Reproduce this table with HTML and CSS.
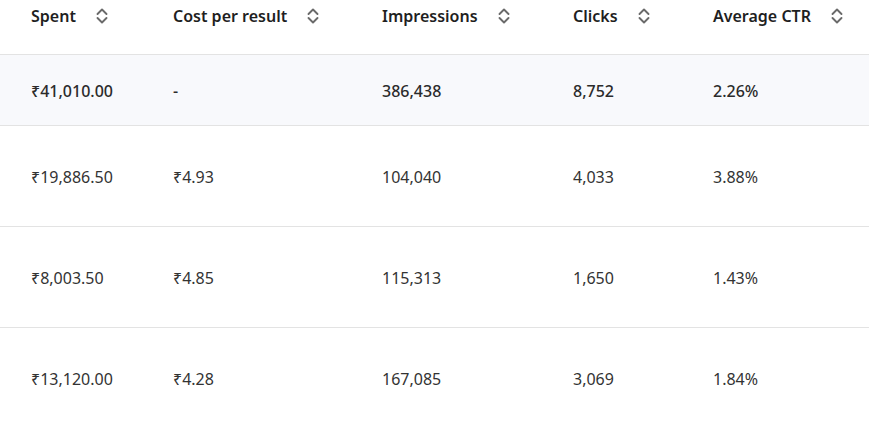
FILE: index.html
```html
<!DOCTYPE html>
<html>
<head>
<meta charset="utf-8">
<link rel="stylesheet" href="styles.css">
</head>
<body>
<div class="table">
  <div class="row head">
    <div class="cell"><span>Spent</span><svg class="sort" viewBox="0 0 12 18"><path d="M1.5 7 L6 2.5 L10.5 7 M1.5 11 L6 15.5 L10.5 11"/></svg></div>
    <div class="cell"><span>Cost per result</span><svg class="sort" viewBox="0 0 12 18"><path d="M1.5 7 L6 2.5 L10.5 7 M1.5 11 L6 15.5 L10.5 11"/></svg></div>
    <div class="cell"><span>Impressions</span><svg class="sort" viewBox="0 0 12 18"><path d="M1.5 7 L6 2.5 L10.5 7 M1.5 11 L6 15.5 L10.5 11"/></svg></div>
    <div class="cell"><span>Clicks</span><svg class="sort" viewBox="0 0 12 18"><path d="M1.5 7 L6 2.5 L10.5 7 M1.5 11 L6 15.5 L10.5 11"/></svg></div>
    <div class="cell"><span>Average CTR</span><svg class="sort" viewBox="0 0 12 18"><path d="M1.5 7 L6 2.5 L10.5 7 M1.5 11 L6 15.5 L10.5 11"/></svg></div>
  </div>
  <div class="row total">
    <div class="cell">₹41,010.00</div>
    <div class="cell">-</div>
    <div class="cell">386,438</div>
    <div class="cell">8,752</div>
    <div class="cell">2.26%</div>
  </div>
  <div class="row body">
    <div class="cell">₹19,886.50</div>
    <div class="cell">₹4.93</div>
    <div class="cell">104,040</div>
    <div class="cell">4,033</div>
    <div class="cell">3.88%</div>
  </div>
  <div class="row body">
    <div class="cell">₹8,003.50</div>
    <div class="cell">₹4.85</div>
    <div class="cell">115,313</div>
    <div class="cell">1,650</div>
    <div class="cell">1.43%</div>
  </div>
  <div class="row body last">
    <div class="cell">₹13,120.00</div>
    <div class="cell">₹4.28</div>
    <div class="cell">167,085</div>
    <div class="cell">3,069</div>
    <div class="cell">1.84%</div>
  </div>
</div>
</body>
</html>
```
FILE: styles.css
```css
html, body {
  margin: 0;
  padding: 0;
  background: #ffffff;
}
body {
  font-family: "Noto Sans", "Open Sans", "DejaVu Sans", sans-serif;
  font-size: 16px;
  color: #2b2b2b;
}
.table {
  width: 869px;
}
.row {
  display: grid;
  grid-template-columns: 142px 209px 191px 140px 1fr;
  padding-left: 31px;
  border-bottom: 1px solid #e3e3e3;
  align-items: center;
}
.cell {
  display: flex;
  align-items: center;
  white-space: nowrap;
}
.head {
  height: 54px;
  align-items: start;
  font-weight: 600;
  color: #1f1f1f;
}
.head .cell {
  padding-top: 4px;
  height: 24px;
}
.sort {
  width: 12px;
  height: 18px;
  margin-left: 20px;
  fill: none;
  stroke: #6a6a6a;
  stroke-width: 1.9;
  stroke-linecap: round;
  stroke-linejoin: round;
}
.total {
  height: 70px;
  background: #f8f9fc;
  font-weight: 500;
  color: #2b2b2b;
}
.total .cell {
  padding-top: 2px;
}
.body {
  height: 100px;
  color: #333333;
}
.body .cell {
  padding-top: 2px;
}
.last {
  border-bottom: none;
}
```
